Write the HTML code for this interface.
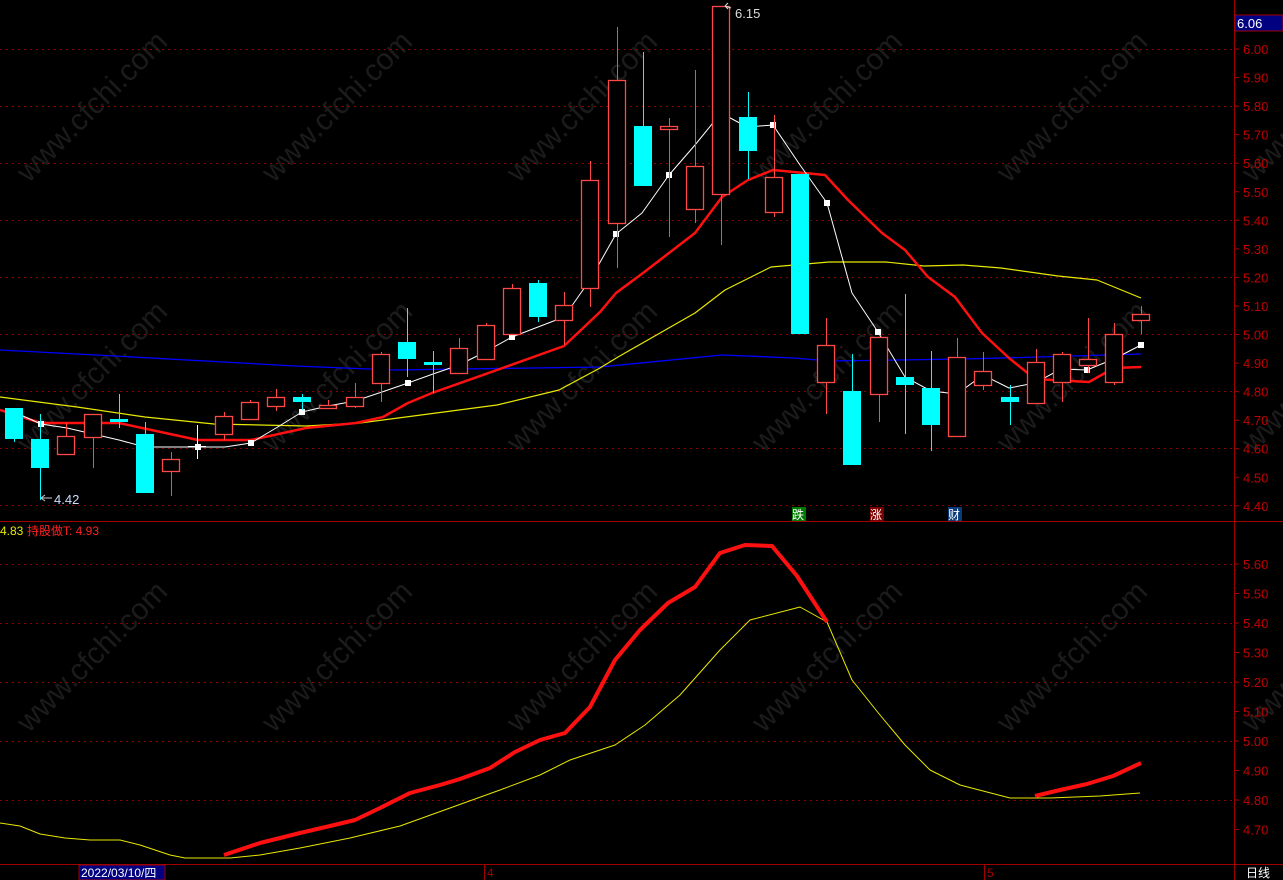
<!DOCTYPE html>
<html><head><meta charset="utf-8"><style>
html,body{margin:0;padding:0;background:#000;width:1283px;height:880px;overflow:hidden}
svg{display:block}
text{font-family:"Liberation Sans","Noto Sans CJK SC",sans-serif}
</style></head><body>
<svg id="s" width="1283" height="880" xmlns="http://www.w3.org/2000/svg">
<rect width="1283" height="880" fill="#000"/>
<g id="wm" fill="#2e2e2e" font-size="30" opacity="0.6"></g>
<g id="grid" stroke="#8b0000" stroke-dasharray="2,4" stroke-width="1"></g>
<line x1="1234.5" y1="0" x2="1234.5" y2="880" stroke="#a00000"/>
<line x1="0" y1="521.5" x2="1283" y2="521.5" stroke="#a00000"/>
<line x1="0" y1="864.5" x2="1283" y2="864.5" stroke="#a00000"/>
<line x1="484.5" y1="864" x2="484.5" y2="880" stroke="#a00000"/>
<line x1="984.5" y1="864" x2="984.5" y2="880" stroke="#a00000"/>
<g id="ticks" stroke="#a00000"></g>
<g id="axis" fill="#c00000" font-size="13"></g>
<g id="lines" fill="none"></g>
<g id="candles"></g>
<g id="top"></g>
<rect x="1235" y="15" width="48" height="16" fill="#000080" stroke="#a00000"/>
<text x="1237" y="28" fill="#fff" font-size="13">6.06</text>
<text x="735" y="18" fill="#ddd" font-size="13">6.15</text>
<path d="M731 8 L725 6 M725 6 L728 3 M725 6 L728 9" stroke="#ddd" fill="none"/>
<text x="54" y="504" fill="#ccddff" font-size="13">4.42</text>
<path d="M41 498 H52 M41 498 L45 495 M41 498 L45 501" stroke="#ccc" fill="none"/>
<rect x="792" y="507" width="14" height="14" fill="#007a00"/>
<text x="792" y="519" fill="#fff" font-size="12">跌</text>
<rect x="870" y="507" width="14" height="14" fill="#7a0000"/>
<text x="870" y="519" fill="#fff" font-size="12">涨</text>
<rect x="948" y="507" width="14" height="14" fill="#0a3a7a"/>
<text x="948" y="519" fill="#fff" font-size="12">财</text>
<text x="0" y="535" fill="#e8e800" font-size="12">4.83</text>
<text x="27" y="535" fill="#ff2020" font-size="12">持股做T: 4.93</text>
<rect x="79" y="865" width="86" height="15" fill="#000080" stroke="#a00000"/>
<text x="81" y="877" fill="#fff" font-size="12">2022/03/10/四</text>
<text x="487" y="877" fill="#a00000" font-size="12">4</text>
<text x="987" y="877" fill="#a00000" font-size="12">5</text>
<text x="1246" y="877" fill="#fff" font-size="12">日线</text>
</svg>
<script>
var NS="http://www.w3.org/2000/svg";
function el(p,t,a,txt){var e=document.createElementNS(NS,t);for(var k in a)e.setAttribute(k,a[k]);if(txt)e.textContent=txt;document.getElementById(p).appendChild(e);return e;}
[49,106,163,220,277,334,391,448,505].forEach(function(y){el("grid","line",{x1:0,x2:1234,y1:y+.5,y2:y+.5});});
[564,623,682,741,800].forEach(function(y){el("grid","line",{x1:0,x2:1234,y1:y+.5,y2:y+.5});});
for(var i=0;i<=16;i++){var p=6.0-i*0.1;var y=49+i*28.55;el("axis","text",{x:1243,y:y+5},p.toFixed(2));el("ticks","line",{x1:1234,x2:1239,y1:y,y2:y});}
for(var i=0;i<=9;i++){var p=5.6-i*0.1;var y=564+i*29.5;el("axis","text",{x:1243,y:y+5},p.toFixed(2));el("ticks","line",{x1:1234,x2:1239,y1:y,y2:y});}
[[0,150],[245,150],[490,150],[735,150],[980,150],[1225,150],[0,420],[245,420],[490,420],[735,420],[980,420],[1225,420],[0,700],[245,700],[490,700],[735,700],[980,700],[1225,700]].forEach(function(q){
el("wm","text",{x:q[0]-10,y:q[1],transform:"rotate(-45 "+(q[0]+50)+" "+(q[1]-30)+")"},"www.cfchi.com");});
function line(pts,col,w){el("lines","polyline",{points:pts.map(function(p){return p.join(",")}).join(" "),stroke:col,"stroke-width":w,"stroke-linejoin":"round"});}
line([[0,350],[115,356],[295,366],[394,370],[600,367],[722,355],[794,358],[829,361],[963,359],[1039,357],[1141,354]],"#0000ff",1.3);
line([[0,397],[77,407],[145,417],[214,424],[306,426],[360,423],[421,415],[497,405],[559,390],[600,368],[618,357],[695,313],[725,290],[771,267],[829,262],[886,262],[924,266],[963,265],[1001,268],[1058,276],[1097,280],[1141,298]],"#e8e800",1.2);
line([[0,410],[41,423],[119,423],[198,440],[251,440],[306,428],[356,423],[383,417],[408,403],[432,393],[497,370],[564,346],[600,312],[616,293],[643,273],[695,233],[722,197],[748,180],[773,170],[825,175],[848,200],[882,233],[905,250],[928,277],[955,297],[982,333],[1009,358],[1035,379],[1089,382],[1114,368],[1141,367]],"#ff1010",2.5);
var wp=[[14,412],[41,424],[67,428],[93,434],[119,440],[145,447],[171,447],[198,447],[225,447],[251,443],[276,428],[302,412],[328,406],[355,401],[382,392],[408,383],[433,374],[459,365],[485,352],[512,337],[538,327],[564,317],[590,280],[616,234],[642,213],[669,175],[695,145],[721,113],[747,127],[773,125],[800,165],[827,203],[852,293],[878,332],[905,377],[931,391],[957,394],[983,375],[1009,388],[1035,383],[1061,369],[1087,370],[1116,358],[1141,345]];
line(wp,"#ffffff",1);
for(var i=1;i<wp.length;i+=2){el("lines","rect",{x:wp[i][0]-3,y:wp[i][1]-3,width:6,height:6,fill:"#fff"});}
line([[0,823],[20,826],[40,834],[65,838],[90,840],[120,840],[140,845],[170,855],[185,858],[230,858],[260,855],[300,848],[350,838],[400,826],[450,808],[500,790],[540,775],[570,760],[615,745],[645,725],[680,695],[720,650],[750,620],[800,607],[827,622],[852,680],[880,715],[905,745],[930,770],[960,785],[1010,798],[1050,798],[1100,796],[1140,793]],"#e8e800",1);
line([[224,855],[260,843],[300,833],[330,826],[355,820],[380,808],[410,793],[440,785],[460,779],[490,768],[515,752],[540,740],[565,733],[590,707],[615,660],[640,630],[668,603],[695,587],[720,553],[745,545],[772,546],[797,576],[827,622]],"#ff1010",4);
line([[1035,796],[1060,790],[1087,784],[1113,776],[1141,763]],"#ff1010",4);
var C=[["c",408,439,408,442],["c",439,468,414,500],["r",436,454,423,454],["r",414,437,414,468],["c",419,422,394,428],["c",434,493,422,493],["r",459,471,452,496],["w",446,446,425,459],["r",416,434,412,440],["r",402,419,400,419],["r",397,406,389,411],["c",397,402,394,410],["r",405,408,400,408],["r",397,406,383,408],["r",354,383,352,402],["c",342,359,308,377],["c",362,365,351,393],["r",348,373,338,373],["r",325,359,323,359],["r",288,334,284,334],["c",283,317,280,322],["r",305,320,292,345],["r",180,288,161,307],["r",80,223,27,268],["c",126,186,52,186],["r",126,129,118,237],["r",166,209,70,223],["r",6,194,6,245],["c",117,151,92,179],["r",177,212,115,217],["c",174,334,174,334],["r",345,382,318,414],["c",391,465,354,465],["r",337,394,337,422],["c",377,385,294,434],["c",388,425,351,451],["r",357,436,338,436],["r",371,385,352,390],["c",397,402,385,425],["r",362,403,349,404],["r",354,382,352,402],["r",359,365,318,373],["r",334,382,323,385],["r",314,320,306,334]];
C.forEach(function(c,i){var x=Math.round(14+i*26.2);var t=c[0],top=c[1],bot=c[2],hi=c[3],lo=c[4];
if(t=="c"){el("candles","line",{x1:x+.5,x2:x+.5,y1:hi,y2:lo,stroke:"#00ffff"});el("candles","rect",{x:x-9,y:top,width:18,height:Math.max(3,bot-top),fill:"#00ffff"});}
else if(t=="r"){el("candles","line",{x1:x+.5,x2:x+.5,y1:hi,y2:top,stroke:"#ff4848"});el("candles","line",{x1:x+.5,x2:x+.5,y1:bot,y2:lo,stroke:"#ff4848"});el("candles","rect",{x:x-8.5,y:top+.5,width:17,height:Math.max(2,bot-top),fill:"#000",stroke:"#ff4848","stroke-width":1.3});}
else{el("candles","line",{x1:x+.5,x2:x+.5,y1:hi,y2:lo,stroke:"#fff"});el("candles","line",{x1:x-9,x2:x+9,y1:top+.5,y2:top+.5,stroke:"#fff"});}
});
</script>
</body></html>
